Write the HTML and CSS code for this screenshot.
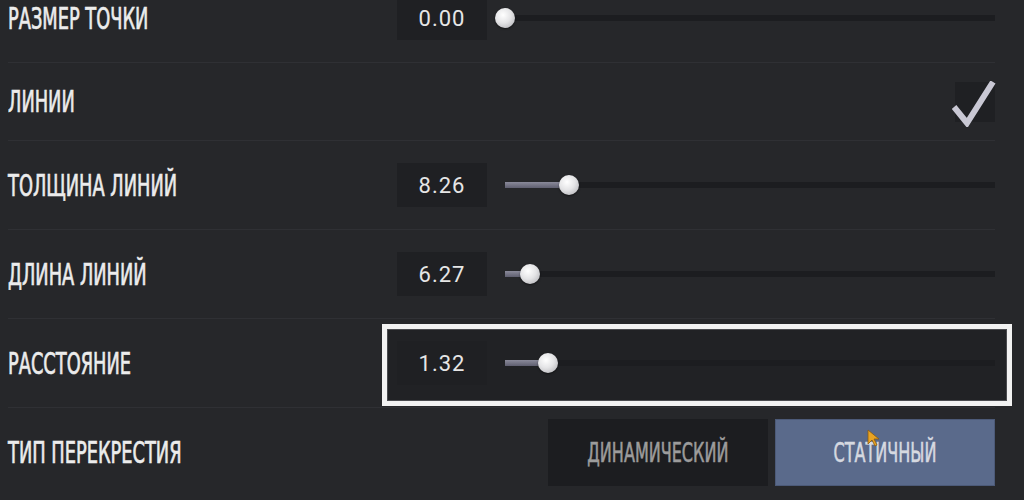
FILE: index.html
```html
<!DOCTYPE html>
<html lang="ru">
<head>
  <meta charset="UTF-8">
  <title>Прицел</title>
  <link rel="stylesheet" href="styles.css">
</head>
<body>
  <section class="settings">
    <div class="row">
      <div class="label"><span>РАЗМЕР ТОЧКИ</span></div>
      <div class="control">
        <div class="value">0.00</div>
        <div class="slider"><div class="fill" style="width:0%"></div><div class="thumb" style="left:0%"></div></div>
      </div>
    </div>
    <div class="row short">
      <div class="label"><span>ЛИНИИ</span></div>
      <div class="control end">
        <div class="checkbox">
          <svg width="46" height="46" viewBox="0 0 46 46"><polyline points="2,26 15,42 41,1" fill="none" stroke="#c9c8d4" stroke-width="6"/></svg>
        </div>
      </div>
    </div>
    <div class="row">
      <div class="label"><span>ТОЛЩИНА ЛИНИЙ</span></div>
      <div class="control">
        <div class="value">8.26</div>
        <div class="slider"><div class="fill" style="width:13.1%"></div><div class="thumb" style="left:13.1%"></div></div>
      </div>
    </div>
    <div class="row">
      <div class="label"><span>ДЛИНА ЛИНИЙ</span></div>
      <div class="control">
        <div class="value">6.27</div>
        <div class="slider"><div class="fill" style="width:5.1%"></div><div class="thumb" style="left:5.1%"></div></div>
      </div>
    </div>
    <div class="row">
      <div class="label"><span>РАССТОЯНИЕ</span></div>
      <div class="control selected">
        <div class="value">1.32</div>
        <div class="slider"><div class="fill" style="width:8.8%"></div><div class="thumb" style="left:8.8%"></div></div>
      </div>
    </div>
    <div class="row">
      <div class="label"><span>ТИП ПЕРЕКРЕСТИЯ</span></div>
      <div class="control end buttons">
        <button class="option"><span>ДИНАМИЧЕСКИЙ</span></button>
        <button class="option active"><span>СТАТИЧНЫЙ</span>
          <svg class="cursor" width="14" height="18" viewBox="0 0 14 18"><polygon points="1,1 1,15 5,11 8,17 10,16 7,10 12,10" fill="#e8a323" stroke="#8a5a10" stroke-width="0.8"/></svg>
        </button>
      </div>
    </div>
  </section>
</body>
</html>
```

FILE: styles.css
```css
body {
  margin: 0;
  background: #26272a;
  overflow: hidden;
  font-family: "Liberation Sans Narrow", "DejaVu Sans Condensed", "Liberation Sans", sans-serif;
}
.settings {
  margin-top: -26px;
  padding: 0 29px 0 8px;
}
.row {
  display: grid;
  grid-template-columns: 389px 1fr;
  align-items: center;
  height: 89px;
  box-sizing: border-box;
  border-bottom: 1px solid #2f3034;
}
.row.short {
  height: 78px;
}
.row:last-child {
  border-bottom: none;
}
.label {
  color: #ececec;
  font-size: 30px;
  white-space: nowrap;
}
.label span {
  display: inline-block;
  transform: scaleX(0.66);
  transform-origin: left center;
  -webkit-text-stroke: 0.7px currentColor;
}
.control {
  display: flex;
  align-items: center;
  gap: 18px;
  height: 45px;
}
.control.end {
  justify-content: flex-end;
}
.control.selected {
  margin: -17px -17px -20px -15px;
  padding: 12px 12px 15px 10px;
  border: 5px solid #f2f2f2;
  background: #212225;
  box-shadow: inset 0 0 0 1px #4a4b4f;
}
.value {
  width: 90px;
  height: 44px;
  background: #1f2023;
  color: #e6e6e6;
  font-family: Roboto, "DejaVu Sans", sans-serif;
  font-size: 22px;
  letter-spacing: 1px;
  display: flex;
  align-items: center;
  justify-content: center;
}
.slider {
  flex: 1;
  height: 6px;
  background: #1c1d20;
  position: relative;
}
.fill {
  position: absolute;
  left: 0;
  top: 0;
  bottom: 0;
  background: linear-gradient(#8a8a9a, #5f5f70);
}
.thumb {
  position: absolute;
  top: 50%;
  width: 20px;
  height: 20px;
  border-radius: 50%;
  transform: translate(-50%, -50%);
  background: radial-gradient(circle at 40% 35%, #ffffff, #e4e4e6 45%, #a9a9ae);
  box-shadow: 0 1px 2px rgba(0,0,0,0.5);
}
.checkbox {
  width: 40px;
  height: 40px;
  background: #1f2023;
  position: relative;
}
.checkbox svg {
  position: absolute;
  left: -3px;
  top: -1px;
}
.buttons {
  gap: 7px;
  height: 67px;
}
.option {
  width: 220px;
  height: 67px;
  border: none;
  background: #1c1d20;
  color: #9c9c9c;
  font-family: inherit;
  font-size: 27px;
  position: relative;
  padding: 0;
}
.option span {
  display: inline-block;
  transform: scaleX(0.66);
  -webkit-text-stroke: 0.6px currentColor;
}
.option.active {
  background: #5a6a8b;
  color: #d6d9e0;
  border: 1px solid #4c5a78;
}
.cursor {
  position: absolute;
  left: 91px;
  top: 9px;
}
```
